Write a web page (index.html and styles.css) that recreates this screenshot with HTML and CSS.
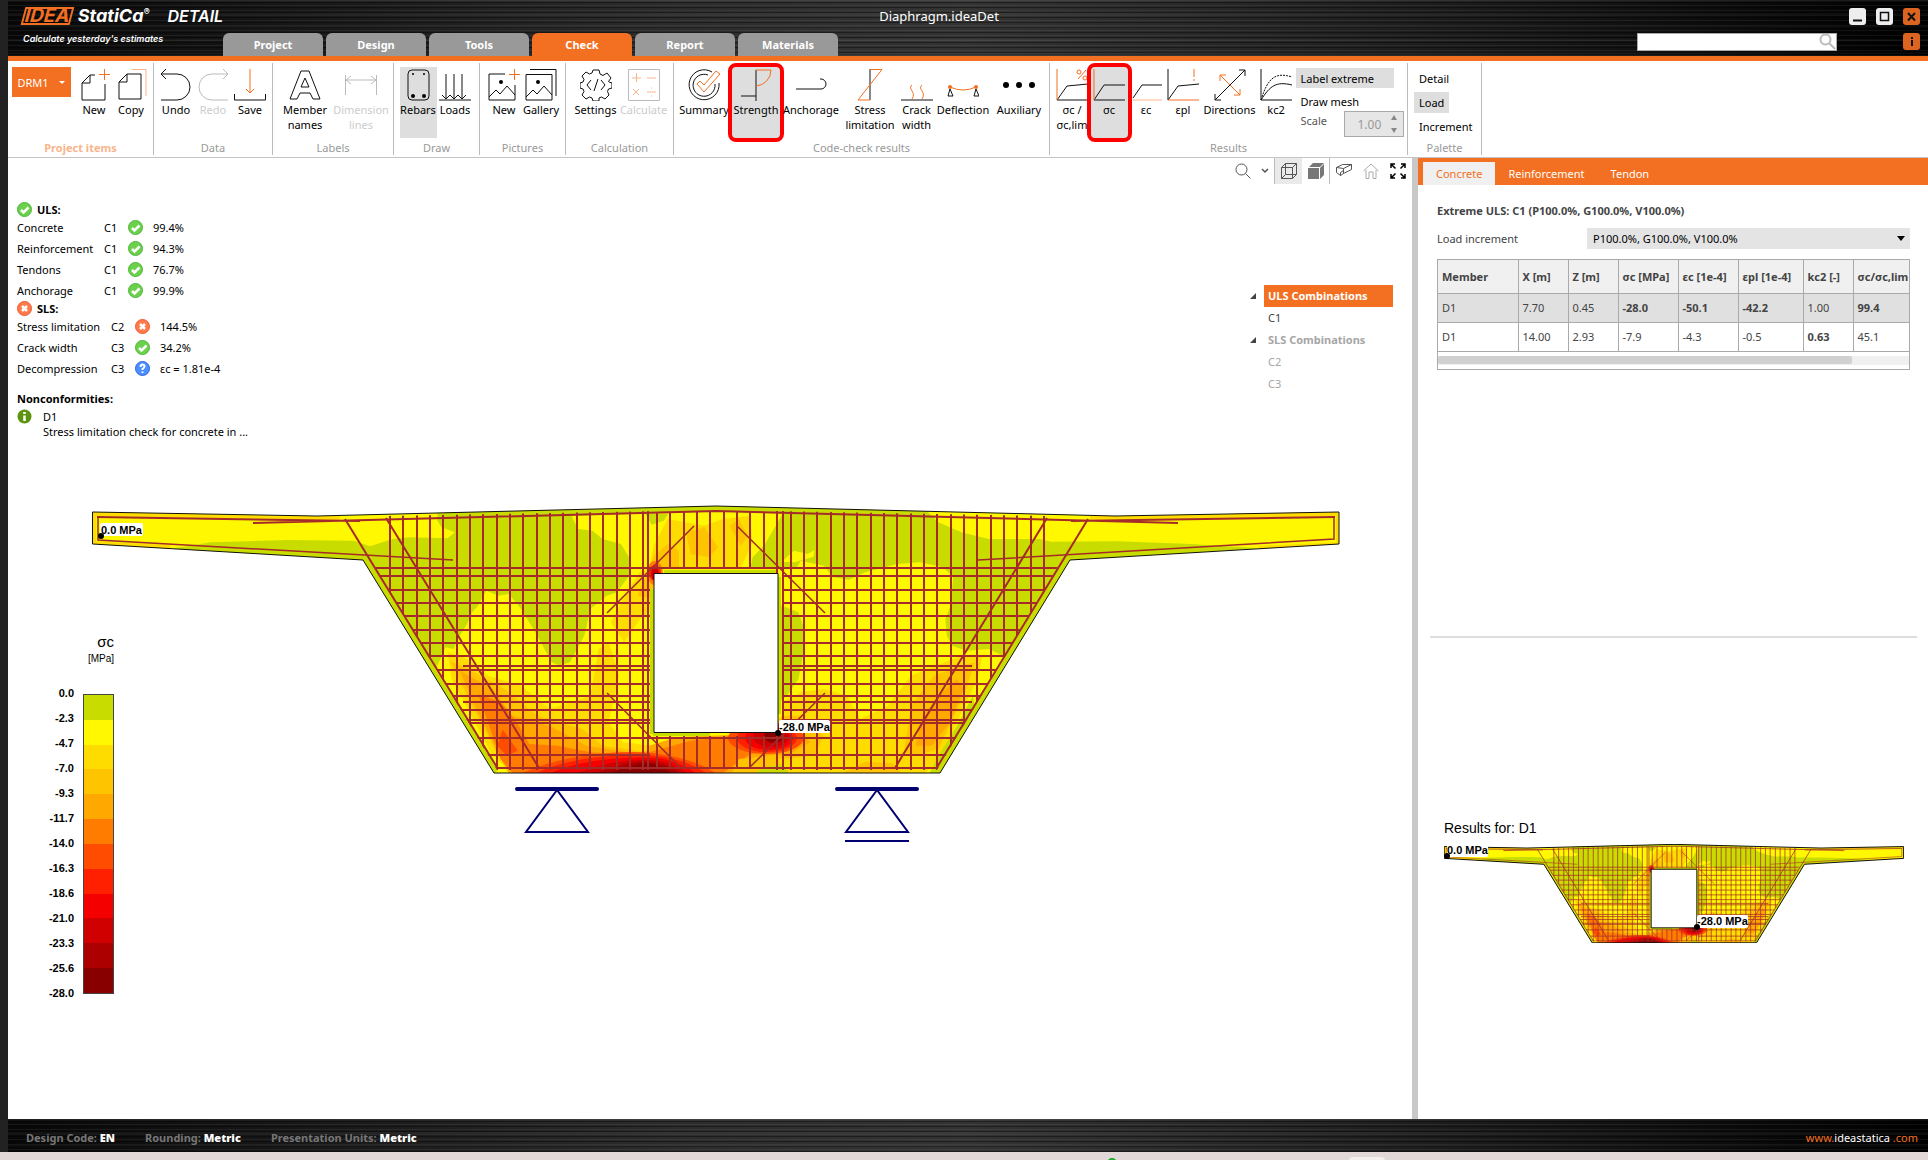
FILE: index.html
```html
<!DOCTYPE html>
<html lang="en">
  <head>
    <meta charset="UTF-8" />
    <meta name="viewport" content="width=device-width, initial-scale=1.0" />
    <title>IDEA StatiCa Detail - Diaphragm.ideaDet</title>
    <link rel="stylesheet" href="styles.css">
  </head>
  <body>
    <div class="app">
      <header class="titlebar brushed">
        <div class="brand">
          <div class="brand-row">
            <span class="logo-idea">IDEA</span>
            <span class="logo-name">StatiCa<sup>®</sup></span>
            <span class="logo-module">DETAIL</span>
          </div>
          <div class="tagline">Calculate yesterday's estimates</div>
        </div>
        <div class="doc-title">Diaphragm.ideaDet</div>
        <div class="window-buttons">
          <button class="win" aria-label="Minimize"><svg viewBox="0 0 17 17"><path d="M4 12.500h9" stroke="#111" stroke-width="2"/></svg></button>
          <button class="win" aria-label="Maximize"><svg viewBox="0 0 17 17"><path d="M4.500 4.500h8v8h-8z" fill="none" stroke="#111" stroke-width="1.500"/></svg></button>
          <button class="win accent" aria-label="Close"><svg viewBox="0 0 17 17"><path d="M5 5l7 7.500M12 5l-7 7.500" stroke="#111" stroke-width="2"/></svg></button>
        </div>
        <nav class="tabs">
          <button class="tab">Project</button>
          <button class="tab">Design</button>
          <button class="tab">Tools</button>
          <button class="tab active">Check</button>
          <button class="tab">Report</button>
          <button class="tab">Materials</button>
        </nav>
        <div class="search-row">
          <div class="search">
            <input type="text" aria-label="Search">
            <svg viewBox="0 0 17 17"><circle cx="6.500" cy="6.500" r="5" fill="none" stroke="#bbb" stroke-width="2"/><path d="M10.500 10.500l5.500 5.500" stroke="#bbb" stroke-width="2"/></svg>
          </div>
          <button class="win accent" aria-label="Info"><svg viewBox="0 0 17 17"><path d="M9 4v2M9 7v6" stroke="#111" stroke-width="2"/></svg></button>
        </div>
      </header>

      <div class="ribbon">
        <section class="group g-items">
          <div class="tools">
            <button class="item-picker">DRM1 <span class="caret"></span></button>
            <button class="tool">
              <svg class="ico" viewBox="0 0 32 32"><path d="M17 6h-5l-8 8v17h23V15M4 14h8V6"/><path class="o" d="M21 5.500h11M26.500 0v11"/></svg>
              New
            </button>
            <button class="tool">
              <svg class="ico" viewBox="0 0 32 32"><path d="M12 5h14v25H4V13zM4 13h8V5"/><path class="o soft" d="M17 .5h14V27"/></svg>
              Copy
            </button>
          </div>
          <h2 class="group-name accent-name">Project items</h2>
        </section>
        <section class="group g-data">
          <div class="tools">
            <button class="tool">
              <svg class="ico" viewBox="0 0 32 32"><path d="M1 31h16a13 13 0 0 0 0-26H1M6 0L1 5l5 5"/></svg>
              Undo
            </button>
            <button class="tool" disabled>
              <svg class="ico gray" viewBox="0 0 32 32"><path d="M31 31H15a13 13 0 0 1 0-26h16M26 0l5 5-5 5"/></svg>
              Redo
            </button>
            <button class="tool">
              <svg class="ico" viewBox="0 0 32 32"><path d="M.5 25v6h31v-6"/><path class="o" d="M16 0v24M12 20l4 4 4-4"/></svg>
              Save
            </button>
          </div>
          <h2 class="group-name">Data</h2>
        </section>
        <section class="group g-labels">
          <div class="tools">
            <button class="tool lg">
              <svg class="ico" viewBox="0 0 32 32"><path d="M12 2h8l11 28h-7l-3-6H11l-3 6H1zM16 9l-4 9h8z"/></svg>
              Member names
            </button>
            <button class="tool lg" disabled>
              <svg class="ico gray" viewBox="0 0 32 32"><path d="M.5 6v20M31.500 6v20M1 11h30M6 7l-5 4 5 4M26 7l5 4-5 4"/></svg>
              Dimension lines
            </button>
          </div>
          <h2 class="group-name">Labels</h2>
        </section>
        <section class="group g-draw">
          <div class="tools">
            <button class="tool on">
              <svg class="ico" viewBox="0 0 32 32"><rect x="6" y="1" width="21" height="30" rx="4"/><circle class="k" cx="11" cy="27" r="2"/><circle class="k" cx="22" cy="27" r="2"/><circle class="k" cx="11" cy="5" r="1"/><circle class="k" cx="22" cy="5" r="1"/></svg>
              Rebars
            </button>
            <button class="tool">
              <svg class="ico" viewBox="0 0 32 32"><path d="M0 31h32M7 5v25M15 5v25M23 5v25M3 26l4 4 4-4 4 4 4-4 4 4 4-4"/></svg>
              Loads
            </button>
          </div>
          <h2 class="group-name">Draw</h2>
        </section>
        <section class="group g-pics">
          <div class="tools">
            <button class="tool">
              <svg class="ico" viewBox="0 0 32 32"><path d="M17 5H1v26h26V16M1 28l7-7 4 4 7-8 8 9"/><circle class="k" cx="13" cy="13" r="2"/><path class="o" d="M21 5.500h11M26.500 0v11"/></svg>
              New
            </button>
            <button class="tool">
              <svg class="ico" viewBox="0 0 32 32"><path d="M1 5.500h26V31H1zM1 28l7-7 4 4 7-8 8 9M5 .5h26V27"/><circle class="k" cx="13" cy="13" r="2"/></svg>
              Gallery
            </button>
          </div>
          <h2 class="group-name">Pictures</h2>
        </section>
        <section class="group g-calc">
          <div class="tools">
            <button class="tool md">
              <svg class="ico" viewBox="0 0 32 32"><path d="M13 1h6l1 4 3 1.500L27 4l4 5-2.500 3.500L29 13l3 1v5l-3.500 1-1 2.500L29 26l-4 4-3.500-2-2.500 1v3h-6l-1-3-2.500-1L6 30l-4-4 2-3.500L3 20l-3-1v-5l3-1 1-2.500L2 7l4-4 3.500 2L12 4zM11 11l-4 5 4 5M21 11l4 5-4 5M18 10l-4 12"/></svg>
              Settings
            </button>
            <button class="tool md" disabled>
              <svg class="ico gray" viewBox="0 0 32 32"><path d="M.5 .5h31v31H.5z"/><path class="o soft" d="M4 9h9M8.500 4v9M19 9h9M5 20l6 6M11 20l-6 6M19 23h9M23.500 18.500v1M23.500 26.500v1"/></svg>
              Calculate
            </button>
          </div>
          <h2 class="group-name">Calculation</h2>
        </section>
        <section class="group g-code">
          <div class="tools">
            <button class="tool lg">
              <svg class="ico" viewBox="0 0 32 32"><path d="M24 3a15 15 0 1 0 7 11M20 6a11 11 0 1 0 7 9"/><path class="o" d="M9 15l3-3 4 4L28 2l4 3-16 18z"/></svg>
              Summary
            </button>
            <button class="tool md on marked">
              <svg class="ico" viewBox="0 0 32 32"><path d="M1 27h15M16 1v31"/><path class="o" d="M16 1h15a16 16 0 0 1-15 16"/></svg>
              Strength
            </button>
            <button class="tool xl">
              <svg class="ico" viewBox="0 0 32 32"><path d="M1 20h25a5 5 0 0 0 0-10h-1"/></svg>
              Anchorage
            </button>
            <button class="tool lg">
              <svg class="ico" viewBox="0 0 32 32"><path d="M16 0v31"/><path class="o" d="M16 .5h12L4 31h12"/></svg>
              Stress limitation
            </button>
            <button class="tool">
              <svg class="ico" viewBox="0 0 32 32"><path d="M0 31h32"/><path class="o" d="M11 16c-5 4 5 7 0 14M21 16c-5 4 5 7 0 14"/></svg>
              Crack width
            </button>
            <button class="tool lg">
              <svg class="ico" viewBox="0 0 32 32"><path d="M3 20l-2 7h5zM29 20l-2 7h5z"/><path class="o" d="M3 18q13 6 26 0"/><circle class="of" cx="3" cy="18" r="2"/><circle class="of" cx="29" cy="18" r="2"/></svg>
              Deflection
            </button>
            <button class="tool lg">
              <svg class="ico" viewBox="0 0 32 32"><circle class="k" cx="3" cy="16" r="3"/><circle class="k" cx="16" cy="16" r="3"/><circle class="k" cx="29" cy="16" r="3"/></svg>
              Auxiliary
            </button>
          </div>
          <h2 class="group-name">Code-check results</h2>
        </section>
        <section class="group g-results">
          <div class="tools">
            <button class="tool">
              <svg class="ico" viewBox="0 0 32 32"><path d="M1 31h31M1 31l10-14 21-2"/><path class="o" d="M1 0v31M22 10l8-9"/><circle class="o" cx="23" cy="3" r="2"/><circle class="o" cx="29" cy="9" r="2"/></svg>
              σc / σc,lim
            </button>
            <button class="tool on marked">
              <svg class="ico" viewBox="0 0 32 32"><path d="M1 31h31M1 31l10-15h21"/><path class="o" d="M1 0v31"/></svg>
              σc
            </button>
            <button class="tool">
              <svg class="ico" viewBox="0 0 32 32"><path d="M3 29l9-13h20"/><path class="o soft" d="M3 31h29"/></svg>
              εc
            </button>
            <button class="tool">
              <svg class="ico" viewBox="0 0 32 32"><path d="M1 0v31l10-14 21-2"/><path class="o" d="M1 31h31M27 0v8M27 10v2"/></svg>
              εpl
            </button>
            <button class="tool lg">
              <svg class="ico" viewBox="0 0 32 32"><path d="M1 31L31 1M25 1h6v6M1 25v6h6"/><path class="o" d="M6 6l20 20M6 12V6h6M20 26h6v-6"/></svg>
              Directions
            </button>
            <button class="tool">
              <svg class="ico" viewBox="0 0 32 32"><path d="M1 0v31h31M1 31C10 17 16 12 32 16"/><path d="M1 31C8 8 16 3 32 8" stroke-dasharray="2 1"/></svg>
              kc2
            </button>
            <div class="options">
              <button class="opt wide on">Label extreme</button>
              <button class="opt">Draw mesh</button>
              <div class="scale">
                <label for="scale">Scale</label>
                <span class="spin">
                  <input id="scale" type="text" value="1.00" disabled>
                  <svg viewBox="0 0 6 18"><path d="M0 5l3-5 3 5zM0 13l3 5 3-5z" fill="#888"/></svg>
                </span>
              </div>
            </div>
          </div>
          <h2 class="group-name">Results</h2>
        </section>
        <section class="group g-palette">
          <div class="options palette">
            <button class="opt">Detail</button>
            <button class="opt on">Load</button>
            <button class="opt">Increment</button>
          </div>
          <h2 class="group-name">Palette</h2>
        </section>
      </div>

      <main class="workspace">
        <div class="viewport">
          <div class="view-tools">
            <button aria-label="Zoom"><svg viewBox="0 0 16 16"><circle cx="6.500" cy="6.500" r="5.500"/><path d="M10.500 10.500L15.500 15.500"/></svg></button>
            <button class="narrow" aria-label="Zoom options"><svg viewBox="0 0 8 16"><path d="M1 6l3 3 3-3" stroke-width="1.500"/></svg></button>
            <button class="first on" aria-label="Wireframe"><svg viewBox="0 0 16 16"><path d="M.5 4.500h11v11H.5zM4.500.5h11v11h-11zM.5 4.500l4-4M11.500 4.500l4-4M11.500 15.500l4-4M.5 15.500l4-4"/></svg></button>
            <button aria-label="Solid"><svg viewBox="0 0 16 16"><path fill="#777" stroke="none" d="M0 5h11v11H0zM1 4l4-4h11l-4 4zM12 5l4-4v11l-4 4z"/></svg></button>
            <button class="first" aria-label="Section"><svg viewBox="0 0 16 16"><path d="M.5 4.500l6-3h9l-8 4zM.5 4.500v5l4 3 3-2v-5M7.500 10.500l8-4v-5M4.500 12.500v-3l3-2"/></svg></button>
            <button class="dim" aria-label="Home"><svg viewBox="0 0 16 16"><path d="M.5 8L8 1l7.500 7M3 7v8.500h3V9h4v6.500h3V7"/></svg></button>
            <button class="dark" aria-label="Full screen"><svg viewBox="0 0 16 16"><path stroke-width="1.500" d="M5.500 5.500L1 1M1 5V1h4M10.500 5.500L15 1M11 1h4v4M5.500 10.500L1 15M1 11v4h4M10.500 10.500L15 15M15 11v4h-4"/></svg></button>
          </div>

          <div class="overview">
            <div class="summary">
              <h3><svg class="st"><use href="#ok"/></svg> ULS:</h3>
              <table class="checks uls">
                <tr><td>Concrete</td><td>C1</td><td><svg class="st"><use href="#ok"/></svg></td><td>99.4%</td></tr>
                <tr><td>Reinforcement</td><td>C1</td><td><svg class="st"><use href="#ok"/></svg></td><td>94.3%</td></tr>
                <tr><td>Tendons</td><td>C1</td><td><svg class="st"><use href="#ok"/></svg></td><td>76.7%</td></tr>
                <tr><td>Anchorage</td><td>C1</td><td><svg class="st"><use href="#ok"/></svg></td><td>99.9%</td></tr>
              </table>
              <h3><svg class="st"><use href="#bad"/></svg> SLS:</h3>
              <table class="checks sls">
                <tr><td>Stress limitation</td><td>C2</td><td><svg class="st"><use href="#bad"/></svg></td><td>144.5%</td></tr>
                <tr><td>Crack width</td><td>C3</td><td><svg class="st"><use href="#ok"/></svg></td><td>34.2%</td></tr>
                <tr><td>Decompression</td><td>C3</td><td><svg class="st"><use href="#ask"/></svg></td><td>εc = 1.81e-4</td></tr>
              </table>
              <h3 class="noncon">Nonconformities:</h3>
              <div class="note">
                <svg class="st"><use href="#info"/></svg>
                <p>D1<br>Stress limitation check for concrete in ...</p>
              </div>
            </div>

            <ul class="tree">
              <li class="node selected"><span>ULS Combinations</span></li>
              <li>C1</li>
              <li class="node muted"><span>SLS Combinations</span></li>
              <li class="muted">C2</li>
              <li class="muted">C3</li>
            </ul>
          </div>

          <svg class="model" viewBox="8 490 1404 380">
            <defs>
              <clipPath id="concrete">
                <path d="M92.500 513L317 517 716 507 1115 517 1339 513V545L1070 561 940 774H494L363 561 92.500 545z"/>
              </clipPath>
              <clipPath id="cage">
                <path d="M345 519L386 517 716 511 1045 517 1087 519 937 771H497z"/>
              </clipPath>
              <g id="ok"><circle cx="7.500" cy="7.500" r="7" fill="#6cd04c" stroke="#4db839"/><path d="M4 8l2.500 2.500L11.500 5.500" fill="none" stroke="#fff" stroke-width="2.500"/></g>
              <g id="bad"><circle cx="7.500" cy="7.500" r="7" fill="#ff7a4a" stroke="#ee5a30"/><path d="M5 5l5 5M10 5l-5 5" stroke="#fff" stroke-width="2.500"/></g>
              <g id="ask"><circle cx="7.500" cy="7.500" r="7" fill="#4a90ff" stroke="#3560e0"/><path d="M5.500 6q0-2.500 2-2.500t2 2q0 1-2 2.500v1M7.500 10.500v1.500" fill="none" stroke="#fff" stroke-width="2"/></g>
              <g id="info"><circle cx="7.500" cy="7.500" r="7" fill="#5c9410"/><path d="M7.500 3v2M7.500 6.500v5.500" stroke="#fff" stroke-width="2.500"/></g>

              <g id="section">
                <g clip-path="url(#concrete)">
                  <path fill="#fff800" d="M90 500h1252v280H90z"/>
                  <!-- thin warmer bands along the cantilevers -->
                  <path fill="none" stroke="#ffdc00" stroke-width="6" d="M340 518L317 518 93 514V545L170 549M1090 518l25 0 224-4v32l-80 4"/>
                  <!-- left web -->
                  <g transform="translate(60 490) scale(.408 .3333)">
                    <path fill="#c8dc00" d="M925 60V95L935 115 968 130 950 148 860 145 815 150 760 172 720 155 560 153 370 160 280 178 300 230H742L900 560 918 540 925 530 945 475 965 480 975 450 1000 400 1010 370 1025 350 1045 305 1075 320 1100 315 1130 360 1165 430 1205 520 1225 530 1250 520 1285 440 1300 360 1340 320 1365 310 1395 260 1400 215 1375 165 1330 150 1305 125 1270 120 1255 85V60zM1435 75l55 0-10 20-30 12z"/>
                    <path fill="#ffdc00" d="M950 490L990 505 1050 560 1130 590 1200 660 1300 620 1320 480 1345 460 1370 560 1345 700 1380 760 1450 770 1568 740V853H1110L1060 800 1000 660 960 570zM1350 400l40-90 30-60 40-20-8 130-30 30-40 70z"/>
                    <path fill="#ffc400" d="M955 515L1000 540 1090 600 1170 680 1280 720 1330 770 1440 790 1568 750V853H1100L1070 790 1010 650zM1415 320l25-70 14-10v90z"/>
                    <path fill="#ffa800" d="M980 545L1060 600 1110 680 1200 710 1290 770 1420 795 1490 755 1568 750V853H1100L1065 770 1020 660z"/>
                    <path fill="#ff7c00" d="M1025 615L1080 640 1120 700 1150 765 1220 770 1300 790 1440 800 1500 770 1640 765V853H1110L1080 810z"/>
                    <path fill="#ff4c00" d="M1085 722L1122 785 1095 800 1072 770z"/>
                  </g>
                  <!-- right web -->
                  <g transform="translate(640 490) scale(.4592 .3333)">
                    <path fill="#ffdc00" d="M60 90L140 110 180 90 240 80 245 160 220 235H20L30 170z"/>
                    <path fill="#ffc400" d="M30 200L60 165 85 185 85 240H20zM100 130l40-15 30 60-20 30-40-10zM195 110l20-20 20 50-15 30z"/>
                    <path fill="#c8dc00" d="M360 60L310 75 300 100 270 170 245 205 240 240H340L350 215 400 230 420 265 455 272 490 250 560 225 610 220 660 235 682 265 676 350 665 390 668 440 680 470 710 485 760 480 790 500 800 520 960 212 1350 178 1200 165 1040 157 895 158 870 150 760 150 700 130 650 100 620 60z"/>
                    <path fill="#fff800" d="M335 185l30 10 15-12-2 20-40 16-30 0z"/>
                    <path fill="#c8dc00" d="M303 350L318 355 345 370 358 420 355 500 345 570 320 620 303 640z"/>
                    <path fill="#ffdc00" d="M310 640L350 610 400 600 450 620 480 690 540 650 590 560 700 500 745 505 735 570 690 700 660 800 620 853H180V740H310z"/>
                    <path fill="#ffc400" d="M575 790L590 650 640 560 700 530 730 520 705 620 650 780 600 800zM440 853l50-35 60 5 20 30zM310 680l40 0 50 60-20 60-70 10-80-10z"/>
                    <path fill="#ffa800" d="M600 770L615 680 650 620 690 570 705 600 675 700 635 770zM310 700l30 10 30 50-50 40-60-10z"/>
                    <path fill="#ffa800" d="M20 770L80 745 200 738H355L335 790 250 805 210 853H20z"/>
                    <path fill="#ff7c00" d="M20 790L110 755 200 740 345 738 325 780 240 795 180 853H20z"/>
                    <path fill="#ffc400" d="M215 810l85-10 10 53H200z"/>
                    <path fill="#c8dc00" d="M270 835l40-10 15 28h-75zM650 800l40-90 35-90 5 40-70 193h-30z"/>
                  </g>
                  <!-- peak over the left support -->
                  <g>
                    <path fill="#ff4c00" d="M519 776Q545 762 590 756T665 756Q700 762 718 776z"/>
                    <path fill="#ff2000" d="M532 776Q560 762 600 758T665 758Q694 764 708 776z"/>
                    <path fill="#f40000" d="M546 776Q575 763 610 760T664 760Q686 766 698 776z"/>
                    <path fill="#d00000" d="M572 776Q600 765 625 762T664 763Q680 768 690 776z"/>
                    <path fill="#ac0000" d="M592 776Q612 767 630 764T662 765Q676 770 682 776z"/>
                    <path fill="#880000" d="M606 776Q620 770 635 766T660 767Q668 771 674 776z"/>
                  </g>
                  <g>
                    <ellipse fill="#ff4c00" cx="766" cy="739" rx="38" ry="16"/>
                    <ellipse fill="#ff2000" cx="767" cy="739" rx="30" ry="14"/>
                    <ellipse fill="#f40000" cx="769" cy="739" rx="24" ry="12"/>
                    <ellipse fill="#d00000" cx="771" cy="738" rx="18" ry="10"/>
                    <ellipse fill="#880000" cx="774" cy="737" rx="10" ry="7"/>
                    <ellipse fill="#ff7c00" cx="655" cy="574" rx="8" ry="12"/>
                    <ellipse fill="#ff2000" cx="655" cy="574" rx="6" ry="8"/>
                    <ellipse fill="#d00000" cx="655" cy="575" rx="4" ry="6"/>
                  </g>
                  <path fill="none" stroke="#c8dc00" stroke-width="9" d="M443 516L716 508 900 513M363 561L494 774M940 774L1070 561"/>
                  <path fill="none" stroke="#c8dc00" stroke-width="4" d="M652 590V735M779 578V715M664 573H777M653 735H710"/>
                </g>
                <path fill="#fff" stroke="#111" vector-effect="non-scaling-stroke" d="M654 574.500h124v159H654z"/>
                <path fill="none" stroke="#111" vector-effect="non-scaling-stroke" d="M92.500 513L317 517 716 507 1115 517 1339 513V545L1070 561 940 774H494L363 561 92.500 545z"/>
                <g fill="none" stroke="#a52a2a" stroke-width="2">
                  <g clip-path="url(#cage)">
                    <path d="M390 510V771M403 510V771M417 510V771M430 510V771M443 510V771M457 510V771M470 510V771M483 510V771M497 510V771M510 510V771M523 510V771M537 510V771M550 510V771M563 510V771M577 510V771M590 510V771M603 510V771M617 510V771M630 510V771M643 510V771M648 510V771"/>
                    <path d="M777 510V574M777 735V771M783 510V771M791 510V771M804 510V771M817 510V771M831 510V771M844 510V771M857 510V771M871 510V771M884 510V771M897 510V771M911 510V771M924 510V771M937 510V771M951 510V771M964 510V771M977 510V771M991 510V771M1004 510V771M1017 510V771M1031 510V771M1044 510V771"/>
                    <path d="M340 577H650M340 591H650M340 604H650M340 617H650M340 631H650M340 644H650M340 657H650M463 667H650M340 671H650M340 685H650M340 697H650M463 703H650M340 711H650M463 721H650M340 724H650M340 756H650"/>
                    <path d="M782 577H1090M782 591H1090M782 604H1090M782 617H1090M782 631H1090M782 644H1090M782 657H1090M782 667H972M782 671H1090M782 685H1090M782 697H1090M782 703H972M782 711H1090M782 721H972M782 724H1090M782 756H1090"/>
                    <path d="M340 569H1090M340 739H1090M340 769H1090"/>
                  </g>
                  <path d="M657 513V570M670 513V570M684 513V570M697 513V570M710 513V570M724 513V570M737 513V570M750 513V570M764 513V570M657 737V770M670 737V770M684 737V770M697 737V770M710 737V770M724 737V770M737 737V770M750 737V770M764 737V770"/>
                  <path d="M345 520L498 770M386 519L539 769M1088 520L936 770M1047 519L895 769"/>
                  <path d="M253 524L716 512 1178 524M97 518L360 522M1071 522L1335 518"/>
                  <path stroke-width="1.500" d="M98 518V541L453 561M1334 518V540L978 561M694 527L607 614M737 527L825 614M607 694L680 768M825 694L750 768"/>
                </g>
              </g>
            </defs>
            <use href="#section"/>
            <g fill="none" stroke="#000070">
              <path stroke-width="4" stroke-linecap="round" d="M517 790H597M837 790H917"/>
              <path stroke-width="2" d="M557 791L526 833H588zM877 791L846 833H908zM845 842H909"/>
            </g>
            <rect class="tag-bg" x="100" y="524" width="43" height="13" rx="2"/>
            <circle cx="101" cy="537" r="3"/>
            <text class="tag" x="101" y="535">0.0 MPa</text>
            <rect class="tag-bg" x="779" y="721" width="51" height="13" rx="2"/>
            <circle cx="778" cy="734" r="3"/>
            <text class="tag" x="779" y="732">-28.0 MPa</text>
          </svg>

          <div class="legend">
            <div class="legend-title">σc</div>
            <div class="legend-unit">[MPa]</div>
            <div class="legend-body">
              <ol class="values">
                <li>0.0</li><li>-2.3</li><li>-4.7</li><li>-7.0</li><li>-9.3</li><li>-11.7</li><li>-14.0</li>
                <li>-16.3</li><li>-18.6</li><li>-21.0</li><li>-23.3</li><li>-25.6</li><li>-28.0</li>
              </ol>
              <div class="ramp"></div>
            </div>
          </div>
        </div>

        <aside class="panel">
          <nav class="panel-tabs">
            <button class="active">Concrete</button>
            <button>Reinforcement</button>
            <button>Tendon</button>
          </nav>
          <div class="panel-top">
            <h3>Extreme ULS: C1 (P100.0%, G100.0%, V100.0%)</h3>
            <div class="field">
              <label for="increment">Load increment</label>
              <span class="select">
                <select id="increment"><option>P100.0%, G100.0%, V100.0%</option></select>
                <span class="caret"></span>
              </span>
            </div>
            <div class="grid-box">
              <table class="grid">
                <colgroup><col class="c80"><col class="c50"><col class="c50"><col class="c60"><col class="c60"><col class="c65"><col class="c50"><col class="c65"></colgroup>
                <thead>
                  <tr><th>Member</th><th>X [m]</th><th>Z [m]</th><th>σc [MPa]</th><th>εc [1e-4]</th><th>εpl [1e-4]</th><th>kc2 [-]</th><th>σc/σc,lim</th></tr>
                </thead>
                <tbody>
                  <tr class="picked"><td>D1</td><td>7.70</td><td>0.45</td><td><b>-28.0</b></td><td><b>-50.1</b></td><td><b>-42.2</b></td><td>1.00</td><td><b>99.4</b></td></tr>
                  <tr><td>D1</td><td>14.00</td><td>2.93</td><td>-7.9</td><td>-4.3</td><td>-0.5</td><td><b>0.63</b></td><td>45.1</td></tr>
                </tbody>
              </table>
              <div class="scrollbar"><div class="thumb"></div></div>
            </div>
          </div>
          <div class="panel-bottom">
            <p class="results-for">Results for: D1</p>
            <div class="preview">
              <svg viewBox="92 506 1248 269"><use href="#section"/></svg>
              <span class="pin pin-max">0.0 MPa</span>
              <span class="pin pin-min">-28.0 MPa</span>
            </div>
          </div>
        </aside>
      </main>

      <footer class="statusbar brushed">
        <span>Design Code: <b>EN</b></span>
        <span>Rounding: <b>Metric</b></span>
        <span>Presentation Units: <b>Metric</b></span>
        <a href="#">www.<b>ideastatica</b> .com</a>
      </footer>
    </div>
    <div class="desktop"><i class="dot"></i><i class="sheet"></i></div>
  </body>
</html>
```
FILE: styles.css
```css
* {
  box-sizing: border-box;
}
body {
  margin: 0;
  height: 100vh;
  display: flex;
  flex-direction: column;
  background: #e2d8d8;
  font-family: "Noto Sans", "Open Sans", sans-serif;
  font-size: 11px;
  line-height: 15px;
  color: #000;
}
button,
input,
select {
  font: inherit;
  color: inherit;
  border: 0;
  background: none;
  padding: 0;
  margin: 0;
}
h2,
h3,
p,
ul,
ol {
  margin: 0;
  padding: 0;
  list-style: none;
  font-size: inherit;
}
.app {
  flex: 1;
  display: flex;
  flex-direction: column;
  border-left: 8px solid #222;
  background: #fff;
}
.desktop {
  display: flex;
  justify-content: center;
  gap: 232px;
  height: 8px;
  padding-left: 564px;
  overflow: hidden;
  background: #e2d8d8;
}
.dot {
  width: 10px;
  height: 10px;
  margin-top: 6px;
  border-radius: 50%;
  background: #1fae2c;
}
.sheet {
  width: 36px;
  height: 10px;
  margin-top: 5px;
  border-radius: 4px;
  background: #f4efef;
}
.brushed {
  background: repeating-linear-gradient(rgba(255, 255, 255, 0.06) 0 1px, transparent 1px 2px, rgba(0, 0, 0, 0.4) 2px 3px, transparent 3px 5px),
    repeating-linear-gradient(rgba(255, 255, 255, 0.04) 0 2px, transparent 2px 13px),
    linear-gradient(90deg, #080808, #2c2c2c 35%, #333 50%, #1c1c1c 75%, #000);
}

/* title bar */
.titlebar {
  display: grid;
  grid-template-columns: 215px 1fr 291px;
  grid-template-rows: 33px 23px;
  border-bottom: 5px solid #f36f21;
  height: 61px;
}
.brand {
  grid-row: span 2;
  padding: 6px 0 0 15px;
  color: #fff;
  font-style: italic;
  white-space: nowrap;
}
.brand-row {
  display: flex;
  align-items: center;
  height: 20px;
}
.logo-idea {
  width: 64px;
  height: 18px;
  border: 2px solid #f36f21;
  transform: skewX(-15deg);
  color: #f36f21;
  font: bold 19px/14px Inter, sans-serif;
  text-align: center;
}
.logo-name {
  margin-left: 6px;
  font: italic bold 18px/20px Inter, sans-serif;
}
.logo-name sup {
  font-size: 9px;
  line-height: 9px;
}
.logo-module {
  margin-left: 18px;
  font: italic 600 16px/20px Inter, sans-serif;
}
.tagline {
  margin-top: 5px;
  font: italic 600 9px/15px Inter, sans-serif;
}
.doc-title {
  color: #fff;
  text-align: center;
  font-size: 13px;
  line-height: 33px;
  padding-left: 18px;
}
.window-buttons {
  display: flex;
  justify-content: flex-end;
  gap: 10px;
  padding: 8px 8px 0 0;
}
.win {
  width: 17px;
  height: 17px;
  border-radius: 3px;
  background: #eee;
}
.win svg {
  display: block;
}
.win.accent {
  background: #dd6420;
}
.tabs {
  display: flex;
  gap: 3px;
}
.tab {
  width: 100px;
  height: 23px;
  border-radius: 6px 6px 0 0;
  background: #999;
  color: #fff;
  font-weight: bold;
}
.tab.active {
  background: #f36f21;
}
.search-row {
  display: flex;
  justify-content: space-between;
  padding-right: 8px;
}
.search {
  position: relative;
  width: 200px;
  height: 18px;
}
.search input {
  width: 100%;
  height: 18px;
  background: #fff;
  border: 1px solid #aaa;
}
.search svg {
  position: absolute;
  right: 1px;
  top: 0;
  width: 17px;
}

/* ribbon */
.ribbon {
  display: flex;
  height: 97px;
  padding: 2px 0;
  border-bottom: 1px solid #c4c4c4;
}
.group {
  display: flex;
  flex-direction: column;
  justify-content: space-between;
  border-right: 1px solid #bbb;
  height: 92px;
}
.tools {
  display: flex;
  justify-content: center;
  padding-top: 4px;
}
.g-items {
  width: 146px;
}
.g-data {
  width: 119px;
}
.g-labels {
  width: 121px;
}
.g-draw,
.g-pics {
  width: 86px;
}
.g-calc {
  width: 108px;
}
.g-code {
  width: 376px;
}
.g-results {
  width: 358px;
}
.g-palette {
  width: 74px;
}
.group-name {
  text-align: center;
  font-weight: normal;
  color: #999;
  line-height: 15px;
}
.accent-name {
  font-weight: bold;
  color: #f9b48c;
}
.item-picker {
  display: flex;
  align-items: center;
  justify-content: space-between;
  width: 59px;
  height: 30px;
  margin-right: 5px;
  padding: 0 6px;
  background: #f36f21;
  color: #fff;
}
.caret {
  border: 3px solid transparent;
  border-top-color: currentColor;
  border-bottom: 0;
}
.tool {
  position: relative;
  flex: none;
  width: 37px;
  height: 71px;
  display: flex;
  flex-direction: column;
  align-items: center;
  gap: 1px;
}
.tool.md {
  width: 48px;
}
.tool.lg {
  width: 56px;
}
.tool.xl {
  width: 62px;
}
.tool:disabled {
  color: #ccc;
}
.on {
  background: #dedede;
}
.marked::after {
  content: "";
  position: absolute;
  inset: -4px;
  border: 4px solid #f00;
  border-radius: 8px;
}
.ico {
  flex: none;
  width: 32px;
  height: 32px;
  margin-top: 2px;
  fill: none;
  stroke: #111;
}
.ico.gray {
  stroke: #bbb;
}
.ico .o {
  stroke: #f36f21;
}
.ico .of {
  fill: #f36f21;
  stroke: none;
}
.ico .k {
  fill: #000;
  stroke: none;
}
.ico .soft {
  stroke: #f9b48c;
}
.options {
  display: flex;
  flex-direction: column;
  align-items: flex-start;
  margin-left: 1px;
}
.opt {
  padding: 0 5px;
  height: 20px;
  text-align: left;
}
.opt.wide {
  width: 98px;
  margin: 1px 0 3px;
}
.palette {
  margin: 5px 0 0 6px;
  gap: 3px;
}
.palette .opt {
  height: 21px;
}
.scale {
  display: flex;
  width: 108px;
  justify-content: space-between;
  padding-left: 5px;
  color: #555;
}
.scale label {
  line-height: 19px;
}
.spin {
  display: flex;
  align-items: center;
  width: 60px;
  height: 26px;
  border: 1px solid #aaa;
  background: #e6e6e6;
  color: #999;
}
.spin input {
  width: 46px;
  padding-left: 13px;
  font-size: 12px;
}
.spin svg {
  width: 6px;
}

/* workspace */
.workspace {
  flex: 1;
  display: flex;
}
.viewport {
  position: relative;
  flex: 1;
  border-right: 6px solid #c8c8c8;
}
.view-tools {
  display: flex;
  justify-content: flex-end;
  height: 26px;
  padding-right: 1px;
}
.view-tools button {
  width: 27px;
  display: grid;
  place-items: center;
}
.view-tools .narrow {
  width: 18px;
}
.view-tools .first {
  width: 28px;
  border-left: 1px solid #bbb;
}
.view-tools svg {
  height: 16px;
  fill: none;
  stroke: #555;
}
.view-tools .on {
  background: #eaeaea;
}
.view-tools .dim svg {
  stroke: #aaa;
}
.view-tools .dark svg {
  stroke: #000;
}
.overview {
  display: flex;
  justify-content: space-between;
  align-items: flex-start;
  height: 305px;
  padding: 18px 19px 0 9px;
}
.summary h3 {
  display: flex;
  align-items: center;
  gap: 5px;
  height: 15px;
}
.st {
  display: block;
  width: 15px;
  height: 15px;
}
.checks {
  border-collapse: collapse;
}
.checks td {
  height: 21px;
  padding: 0;
  white-space: nowrap;
}
.checks td:first-child {
  width: 87px;
}
.checks td:nth-child(2) {
  width: 24px;
}
.checks td:nth-child(3) {
  width: 25px;
}
.checks.sls td:first-child {
  width: 94px;
}
.summary .noncon {
  margin-top: 12px;
}
.note {
  display: flex;
  gap: 11px;
  padding-top: 3px;
}
.tree {
  width: 129px;
  margin-top: 83px;
  line-height: 22px;
  color: #444;
}
.tree li {
  position: relative;
  padding-left: 4px;
}
.tree .node {
  font-weight: bold;
}
.tree .node::before {
  content: "";
  position: absolute;
  left: -14px;
  top: 8px;
  border-left: 6px solid transparent;
  border-bottom: 6px solid #444;
}
.tree .selected {
  background: #f36f21;
  color: #fff;
}
.tree .muted {
  color: #a6a6a6;
}
.model {
  display: block;
  width: 100%;
}
.tag,
.pin {
  font: bold 11px/13px "Liberation Sans", Arial, sans-serif;
}
.tag-bg {
  fill: #fff;
}
.legend {
  position: absolute;
  left: 30px;
  top: 475px;
  width: 76px;
  text-align: right;
  font-family: "Liberation Sans", Arial, sans-serif;
}
.legend-title {
  font-size: 15px;
  line-height: 18px;
}
.legend-unit {
  font-size: 10px;
}
.legend-body {
  display: flex;
  justify-content: flex-end;
  gap: 9px;
  margin-top: 15px;
}
.values {
  font-weight: bold;
}
.values li {
  height: 25px;
  line-height: 25px;
}
.ramp {
  width: 31px;
  height: 300px;
  margin-top: 13px;
  border: 1px solid #444;
  background: linear-gradient(
    #c8dc00 0 8.33%, #fff800 0 16.67%, #ffdc00 0 25%, #ffc400 0 33.33%,
    #ffa800 0 41.67%, #ff7c00 0 50%, #ff4c00 0 58.33%, #ff2000 0 66.67%,
    #f40000 0 75%, #d00000 0 83.33%, #ac0000 0 91.67%, #880000 0
  );
}

/* results panel */
.panel {
  width: 510px;
  display: flex;
  flex-direction: column;
  color: #444;
}
.panel-tabs {
  display: flex;
  padding: 4px 5px 0;
  background: #f36f21;
}
.panel-tabs button {
  height: 23px;
  padding: 0 13px;
  color: #fff;
}
.panel-tabs .active {
  background: #f0f0f0;
  color: #f36f21;
}
.panel-top {
  margin: 0 11px 0 12px;
  padding: 18px 7px 0;
  height: 453px;
  border-bottom: 2px solid #ddd;
}
.field {
  display: flex;
  align-items: center;
  justify-content: space-between;
  margin: 10px 0;
}
.select {
  position: relative;
  width: 323px;
  color: #000;
}
.select select {
  appearance: none;
  width: 100%;
  height: 21px;
  padding: 0 6px;
  background: #e4e4e4;
}
.select .caret {
  position: absolute;
  right: 5px;
  top: 8px;
  border-width: 5px 4px 0;
}
.grid-box {
  border: 1px solid #aaa;
  overflow: hidden;
}
.grid {
  width: 480px;
  table-layout: fixed;
  border-collapse: collapse;
}
.c80 {
  width: 80px;
}
.c65 {
  width: 65px;
}
.c60 {
  width: 60px;
}
.c50 {
  width: 50px;
}
.grid th,
.grid td {
  height: 29px;
  padding: 0 4px;
  border: 1px solid #aaa;
  border-width: 0 1px 1px 0;
  text-align: left;
  white-space: nowrap;
}
.grid th {
  height: 33px;
  background: #f0f0f0;
}
.picked {
  background: #e0e0e0;
}
.scrollbar {
  height: 9px;
  margin: 4px 0;
  background: #f0f0f0;
}
.thumb {
  width: 88%;
  height: 8px;
  border-radius: 2px;
  background: #d0d0d0;
}
.panel-bottom {
  padding: 181px 24px 0 26px;
}
.results-for {
  font: 14px/18px "Liberation Sans", Arial, sans-serif;
  color: #000;
}
.preview {
  position: relative;
  margin-top: 7px;
}
.preview svg {
  display: block;
  width: 100%;
}
.pin {
  position: absolute;
  border-radius: 2px;
  background: #fff;
  color: #000;
}
.pin::before {
  content: "";
  position: absolute;
  left: -3px;
  top: 9px;
  width: 6px;
  height: 6px;
  border-radius: 50%;
  background: #000;
}
.pin-max {
  left: 3px;
  top: 0;
}
.pin-min {
  left: 253px;
  top: 71px;
}

/* status bar */
.statusbar {
  display: flex;
  align-items: center;
  gap: 30px;
  height: 33px;
  padding: 3px 10px 0 18px;
  font-weight: bold;
  color: #777;
}
.statusbar b {
  color: #fff;
}
.statusbar a {
  margin-left: auto;
  color: #f36f21;
  font-weight: normal;
  text-decoration: none;
}
.statusbar a b {
  font-weight: normal;
}
```
